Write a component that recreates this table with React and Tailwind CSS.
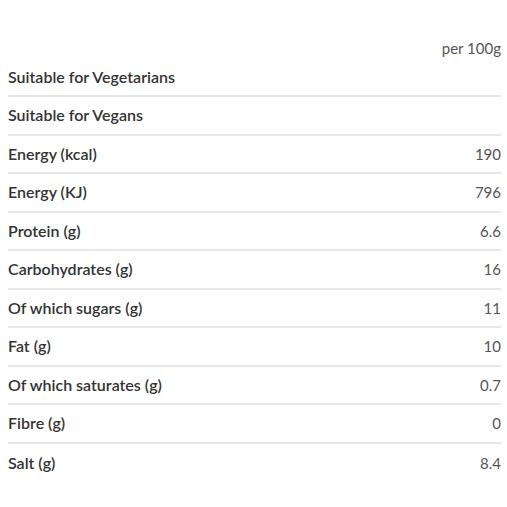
// App.jsx
const rows = [
  { label: "Suitable for Vegetarians", value: "" },
  { label: "Suitable for Vegans", value: "" },
  { label: "Energy (kcal)", value: "190" },
  { label: "Energy (KJ)", value: "796" },
  { label: "Protein (g)", value: "6.6" },
  { label: "Carbohydrates (g)", value: "16" },
  { label: "Of which sugars (g)", value: "11" },
  { label: "Fat (g)", value: "10" },
  { label: "Of which saturates (g)", value: "0.7" },
  { label: "Fibre (g)", value: "0" },
  { label: "Salt (g)", value: "8.4" },
];

export default function App() {
  return (
    <div
      className="w-[507px] h-[507px] bg-white pl-2 pr-[6px] text-[#333]"
      style={{ fontFamily: "Lato, 'Open Sans', sans-serif" }}
    >
      <div className="pt-[38px] h-[58.5px] flex justify-end">
        <span className="text-[15px] leading-5 text-[#555]">per 100g</span>
      </div>
      <div>
        {rows.map((r, i) => (
          <div
            key={r.label}
            className={[
              "h-[38.5px] flex items-center justify-between",
              i < rows.length - 1 ? "border-b-2 border-[#e8e8e8]" : "",
            ].join(" ")}
          >
            <span className="text-[16px] font-semibold text-[#333]">{r.label}</span>
            <span className="text-[15px] text-[#555]">{r.value}</span>
          </div>
        ))}
      </div>
    </div>
  );
}
